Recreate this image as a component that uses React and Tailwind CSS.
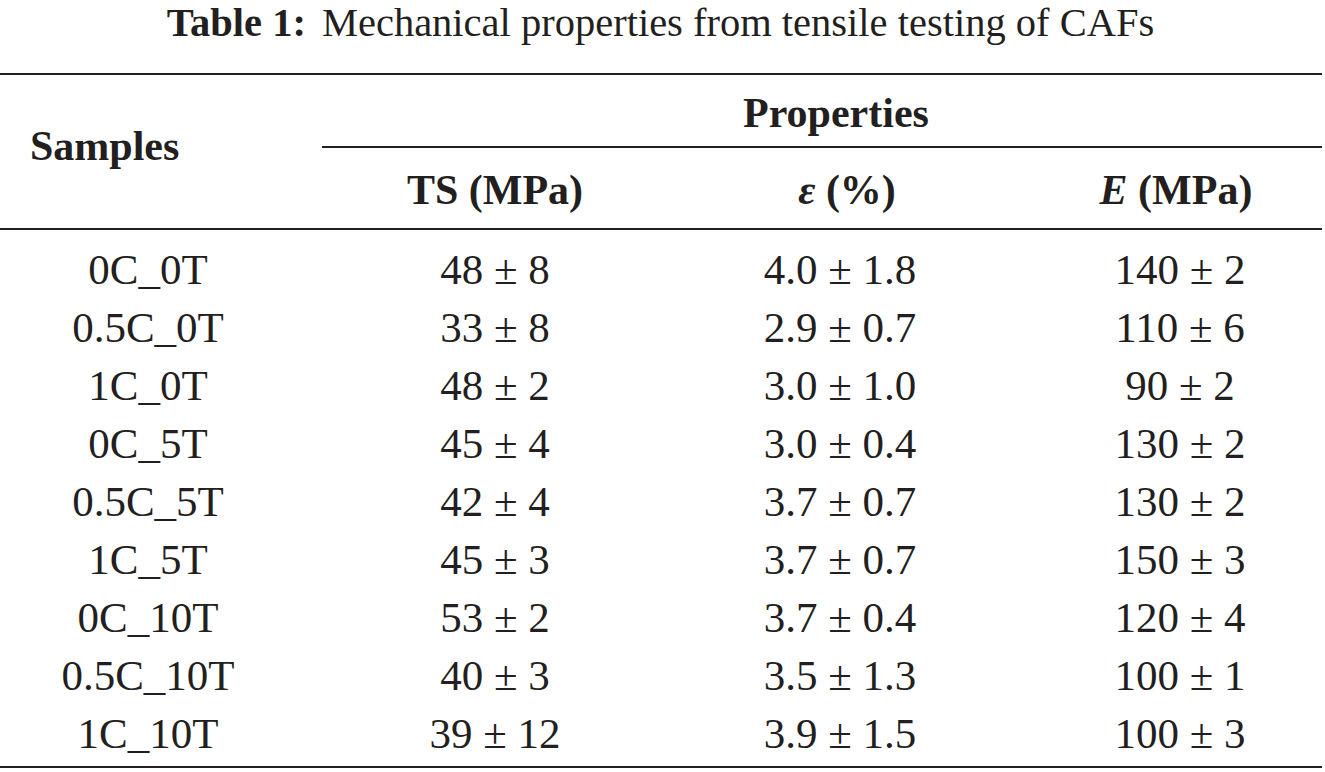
export default function App() {
  const rows = [
    ["0C_0T", "48 ± 8", "4.0 ± 1.8", "140 ± 2"],
    ["0.5C_0T", "33 ± 8", "2.9 ± 0.7", "110 ± 6"],
    ["1C_0T", "48 ± 2", "3.0 ± 1.0", "90 ± 2"],
    ["0C_5T", "45 ± 4", "3.0 ± 0.4", "130 ± 2"],
    ["0.5C_5T", "42 ± 4", "3.7 ± 0.7", "130 ± 2"],
    ["1C_5T", "45 ± 3", "3.7 ± 0.7", "150 ± 3"],
    ["0C_10T", "53 ± 2", "3.7 ± 0.4", "120 ± 4"],
    ["0.5C_10T", "40 ± 3", "3.5 ± 1.3", "100 ± 1"],
    ["1C_10T", "39 ± 12", "3.9 ± 1.5", "100 ± 3"],
  ];
  return (
    <div
      className="w-[1325px] h-[772px] bg-white text-[#231f20] overflow-hidden"
      style={{ fontFamily: '"Liberation Serif", "Times New Roman", serif' }}
    >
      <div className="h-[73px] flex justify-center text-[40.5px] leading-[46px] pr-[4px]">
        <span className="font-bold">Table 1:</span>
        <span className="ml-[16px]">Mechanical properties from tensile testing of CAFs</span>
      </div>
      <div className="w-[1322px] border-t-2 border-[#231f20]" />
      <div className="flex w-[1322px] h-[153px] text-[42px] font-bold">
        <div className="w-[322px] flex items-center pl-[30px] pb-[10px]">Samples</div>
        <div className="flex-1 flex flex-col">
          <div className="h-[71px] flex items-center justify-center pl-[28px] pt-[6px]">Properties</div>
          <div className="border-t-2 border-[#231f20]" />
          <div className="flex-1 grid grid-cols-[346px_318px_1fr] items-center">
            <div className="text-center pt-[4px]">TS (MPa)</div>
            <div className="text-center pt-[4px] pl-[40px]">
              <span className="italic">ε</span> (%)
            </div>
            <div className="text-center pt-[4px] pl-[44px]">
              <span className="italic">E</span> (MPa)
            </div>
          </div>
        </div>
      </div>
      <div className="w-[1322px] border-t-2 border-[#231f20]" />
      <div className="w-[1322px] pt-[10px] pb-[4px] text-[43px]">
        {rows.map((r) => (
          <div key={r[0]} className="grid grid-cols-[322px_346px_318px_1fr] h-[58px] items-center leading-none">
            <div className="text-center pr-[26px]">{r[0]}</div>
            <div className="text-center">{r[1]}</div>
            <div className="text-center pl-[26px]">{r[2]}</div>
            <div className="text-center pl-[52px]">{r[3]}</div>
          </div>
        ))}
      </div>
      <div className="w-[1322px] border-t-2 border-[#231f20]" />
    </div>
  );
}
